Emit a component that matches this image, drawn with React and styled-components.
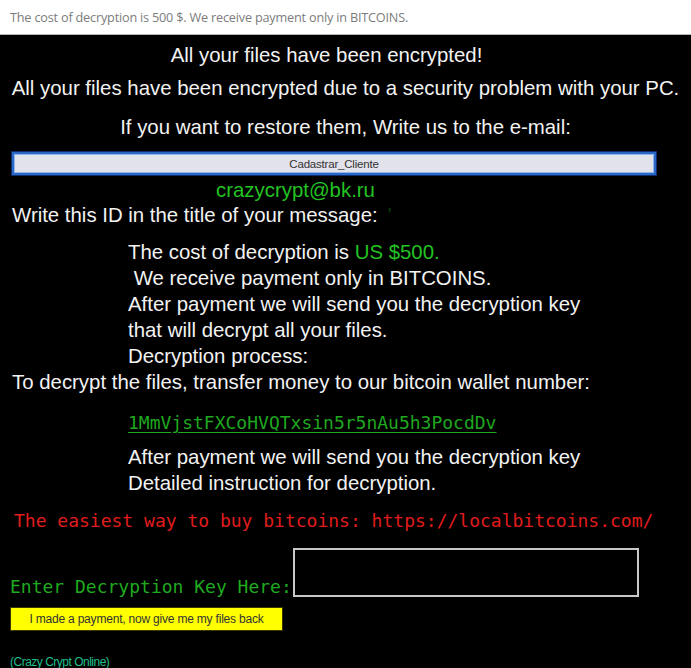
import React from "react";
import styled, { createGlobalStyle } from "styled-components";

const Global = createGlobalStyle`
  html, body { margin: 0; padding: 0; background: #000; }
  body { font-family: "Liberation Sans", Arial, sans-serif; }
`;

const Page = styled.div`
  width: 691px;
  height: 668px;
  background: #000;
  overflow: hidden;
  display: flex;
  flex-direction: column;
  & > * { flex-shrink: 0; }
`;

const TopBar = styled.div`
  height: 34px;
  background: #fff;
  border-bottom: 1px solid #b4b4b4;
  display: flex;
  align-items: center;
  padding-left: 10px;
  font-family: "Open Sans", "Noto Sans", sans-serif;
  font-size: 12.7px;
  color: #7c7c7c;
  letter-spacing: -0.2px;
`;

const Body = styled.div`
  display: flex;
  flex-direction: column;
  & > * { flex-shrink: 0; }
`;

const Line = styled.div`
  font-family: "Liberation Sans", Arial, sans-serif;
  font-size: 20.4px;
  line-height: ${(p) => p.$lh || 26}px;
  color: ${(p) => p.$color || "#f2f2f2"};
  text-align: ${(p) => (p.$center ? "center" : "left")};
  padding-left: ${(p) => (p.$center ? 0 : p.$indent ?? 12)}px;
  padding-right: ${(p) => p.$shift || 0}px;
  margin-top: ${(p) => p.$mt || 0}px;
  white-space: pre;
`;

const Green = styled.span`
  color: #22c322;
`;

const Faint = styled.span`
  color: #0c3a0c;
  margin-left: 10px;
`;

const Progress = styled.div`
  margin: 12px 0 0 12px;
  width: 640px;
  height: 19px;
  border: 2px solid #2a68c8;
  box-shadow: 0 0 0 1px #0d2f70, inset 0 0 0 1px #8fb4ea;
  background: #e2e2ea;
  display: flex;
  align-items: center;
  justify-content: center;
  font-family: "Liberation Sans", Arial, sans-serif;
  font-size: 11.5px;
  color: #333;
  letter-spacing: -0.2px;
`;

const Mono = styled.div`
  font-family: "DejaVu Sans Mono", "Liberation Mono", monospace;
  font-size: 18px;
  line-height: 26px;
  color: ${(p) => p.$color};
  padding-left: ${(p) => p.$indent}px;
  margin-top: ${(p) => p.$mt || 0}px;
  text-decoration: ${(p) => (p.$underline ? "underline" : "none")};
  text-underline-offset: 3px;
  white-space: pre;
`;

const KeyRow = styled.div`
  display: flex;
  align-items: flex-end;
  margin-top: 14px;
  padding-left: 10px;
`;

const KeyLabel = styled.label`
  font-family: "DejaVu Sans Mono", "Liberation Mono", monospace;
  font-size: 18px;
  line-height: 24px;
  color: #1faa1f;
  white-space: pre;
  margin-bottom: -2px;
`;

const KeyInput = styled.input`
  box-sizing: border-box;
  width: 346px;
  height: 49px;
  background: #000;
  border: 2px solid #c8c8c8;
  margin: 0 0 0 1px;
  color: #fff;
  outline: none;
`;

const PayButton = styled.button`
  margin: 10px 0 0 10px;
  width: 273px;
  height: 24px;
  background: #ffff00;
  border: 1px solid #3a3a00;
  font-family: "Liberation Sans", Arial, sans-serif;
  font-size: 12px;
  color: #333;
  letter-spacing: -0.2px;
  padding: 0;
  cursor: pointer;
`;

const Footer = styled.div`
  margin: 24px 0 0 10px;
  font-family: "Liberation Sans", Arial, sans-serif;
  font-size: 12px;
  line-height: 14px;
  color: #1fbf8a;
  letter-spacing: -0.5px;
`;

export default function App() {
  return (
    <>
      <Global />
      <Page>
        <TopBar>The cost of decryption is 500 $. We receive payment only in BITCOINS.</TopBar>
        <Body>
          <Line $center $shift={38} $mt={7}>All your files have been encrypted!</Line>
          <Line $center $mt={7}>All your files have been encrypted due to a security problem with your PC.</Line>
          <Line $center $mt={13}>If you want to restore them, Write us to the e-mail:</Line>
          <Progress>Cadastrar_Cliente</Progress>
          <Line $indent={216} $mt={3} $lh={25} $color="#22c322">crazycrypt@bk.ru</Line>
          <Line $indent={12} $lh={25}>
            Write this ID in the title of your message:<Faint>'</Faint>
          </Line>
          <Line $indent={128} $mt={11}>
            The cost of decryption is <Green>US $500.</Green>
          </Line>
          <Line $indent={128}> We receive payment only in BITCOINS.</Line>
          <Line $indent={128}>After payment we will send you the decryption key</Line>
          <Line $indent={128}>that will decrypt all your files.</Line>
          <Line $indent={128}>Decryption process:</Line>
          <Line $indent={12}>To decrypt the files, transfer money to our bitcoin wallet number:</Line>
          <Mono $indent={128} $mt={15} $color="#1fa81f" $underline>1MmVjstFXCoHVQTxsin5r5nAu5h3PocdDv</Mono>
          <Line $indent={128} $mt={8}>After payment we will send you the decryption key</Line>
          <Line $indent={128}>Detailed instruction for decryption.</Line>
          <Mono $indent={14} $mt={12} $color="#e01c1c">The easiest way to buy bitcoins: https://localbitcoins.com/</Mono>
          <KeyRow>
            <KeyLabel>Enter Decryption Key Here:</KeyLabel>
            <KeyInput type="text" />
          </KeyRow>
          <div>
            <PayButton>I made a payment,  now give me my files back</PayButton>
          </div>
          <Footer>(Crazy Crypt Online)</Footer>
        </Body>
      </Page>
    </>
  );
}
